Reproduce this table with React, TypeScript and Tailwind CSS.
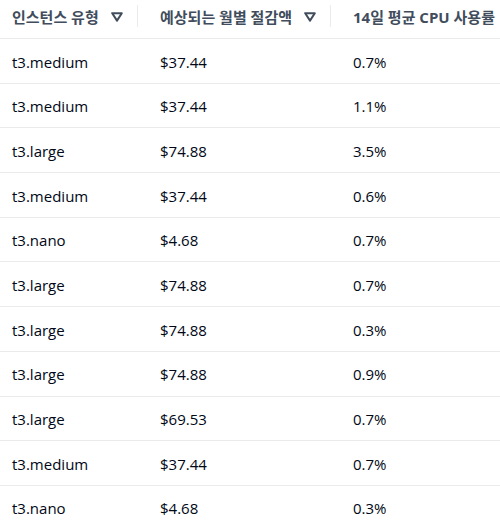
const rows = [
  { type: "t3.medium", savings: "$37.44", cpu: "0.7%" },
  { type: "t3.medium", savings: "$37.44", cpu: "1.1%" },
  { type: "t3.large", savings: "$74.88", cpu: "3.5%" },
  { type: "t3.medium", savings: "$37.44", cpu: "0.6%" },
  { type: "t3.nano", savings: "$4.68", cpu: "0.7%" },
  { type: "t3.large", savings: "$74.88", cpu: "0.7%" },
  { type: "t3.large", savings: "$74.88", cpu: "0.3%" },
  { type: "t3.large", savings: "$74.88", cpu: "0.9%" },
  { type: "t3.large", savings: "$69.53", cpu: "0.7%" },
  { type: "t3.medium", savings: "$37.44", cpu: "0.7%" },
  { type: "t3.nano", savings: "$4.68", cpu: "0.3%" },
];

function SortIcon() {
  return (
    <svg width="12" height="10" viewBox="0 0 12 10" className="shrink-0">
      <path
        d="M1.2 1.2h9.6L6 8.6z"
        fill="none"
        stroke="#414d5c"
        strokeWidth="2"
        strokeLinejoin="round"
      />
    </svg>
  );
}

function HeaderCell({
  label,
  width,
  pad,
}: {
  label: string;
  width: string;
  pad: string;
}) {
  return (
    <div className={`relative flex h-full shrink-0 items-center ${width}`}>
      <div className={`flex items-center gap-[12px] whitespace-nowrap ${pad}`}>
        <span className="font-bold text-[#414d5c]">{label}</span>
        <SortIcon />
      </div>
      <div className="absolute right-0 top-[5px] h-[22px] w-px bg-[#e9ebed]" />
    </div>
  );
}

export default function App() {
  return (
    <div
      className="h-[521px] w-[500px] overflow-hidden bg-white text-[15px] text-[#000716]"
      style={{ fontFamily: '"Open Sans", "Noto Sans CJK KR", sans-serif' }}
    >
      <div className="h-[39px] border-b border-[#e9ebed]">
        <div className="flex h-[34px] w-full">
          <HeaderCell label="인스턴스 유형" width="w-[138px]" pad="pl-3" />
          <HeaderCell label="예상되는 월별 절감액" width="w-[193px]" pad="pl-[22px]" />
          <div className="flex h-full items-center whitespace-nowrap pl-[22px] font-bold text-[#414d5c]">
            14일 평균 CPU 사용률
          </div>
        </div>
      </div>
      {rows.map((r, i) => (
        <div
          key={i}
          className="flex h-[44.7px] items-center border-b border-[#e9ebed] pt-[2px]"
        >
          <div className="w-[160px] shrink-0 pl-3">{r.type}</div>
          <div className="w-[193px] shrink-0">{r.savings}</div>
          <div>{r.cpu}</div>
        </div>
      ))}
    </div>
  );
}
